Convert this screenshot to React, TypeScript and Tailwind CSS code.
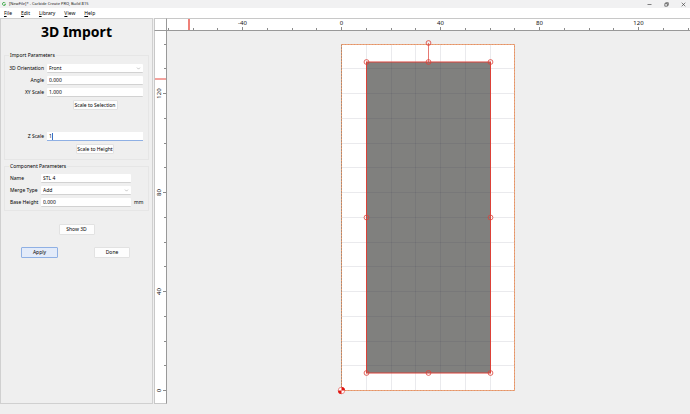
import type { ReactNode } from "react";
import { ChevronDown } from "lucide-react";

// キャンバスの縮尺と原点（px）
const UNIT = 2.475;
const ORIGIN_X = 174;
const ORIGIN_Y = 359;

const xOf = (value: number) => Math.round(ORIGIN_X + value * UNIT) + 0.5;
const yOf = (value: number) => Math.round(ORIGIN_Y - value * UNIT) + 0.5;

const range = (from: number, to: number) => {
  const list: number[] = [];
  for (let v = from; v <= to; v += 10) list.push(v);
  return list;
};

const rulerFont = "fill-[#111] text-[6px]";
const field =
  "h-[9px] min-w-0 rounded-[1px] border-b border-[#d2d2d2] bg-white px-[2px] text-[5px] leading-[8px] text-black outline-none";

type RowProps = {
  id: string;
  label: string;
  right?: boolean;
  children: ReactNode;
};

const Row = ({ id, label, right, children }: RowProps) => (
  <>
    <label htmlFor={id} className={right ? "text-right" : ""}>
      {label}
    </label>
    {children}
  </>
);

type SelectProps = { id: string; value: string; options: string[] };

const Select = ({ id, value, options }: SelectProps) => (
  <div className="relative flex">
    <select id={id} defaultValue={value} className={`${field} w-full appearance-none`}>
      {options.map((o) => (
        <option key={o}>{o}</option>
      ))}
    </select>
    <ChevronDown className="pointer-events-none absolute top-[2px] right-[2px] size-[5px] text-[#777]" />
  </div>
);

type ButtonProps = { className: string; children: ReactNode };

const Button = ({ className, children }: ButtonProps) => (
  <button
    type="button"
    className={`flex items-center justify-center rounded-[1px] border whitespace-nowrap ${className}`}
  >
    {children}
  </button>
);

const TitleBar = () => (
  <header className="flex h-2 shrink-0 items-center justify-between bg-[#f1f1f2] pr-1 pl-[2px]">
    <div className="flex items-center gap-[3px] text-[4px] leading-[8px] text-[#222]">
      <svg viewBox="0 0 10 10" className="size-[4px]">
        <path d="M8.5 2.5A4 4 0 1 0 9 6H5.5" fill="none" stroke="#39a845" strokeWidth="2.2" />
      </svg>
      <span>[NewFile]* - Carbide Create PRO, Build 815</span>
    </div>
    <div className="flex items-center gap-3 text-[#333]">
      <button type="button" aria-label="Minimize">
        <svg viewBox="0 0 5 5" className="size-[5px]">
          <path d="M.5 2.5h4" stroke="currentColor" strokeWidth=".6" />
        </svg>
      </button>
      <button type="button" aria-label="Restore">
        <svg viewBox="0 0 5 5" className="size-[5px]">
          <path
            d="M.8 1.6h2.6v2.6H.8zM1.7 1.2V.7h2.6v2.6h-.6"
            fill="none"
            stroke="currentColor"
            strokeWidth=".6"
          />
        </svg>
      </button>
      <button type="button" aria-label="Close">
        <svg viewBox="0 0 5 5" className="size-[5px]">
          <path d="M.7.7l3.6 3.6M4.3.7L.7 4.3" stroke="currentColor" strokeWidth=".6" />
        </svg>
      </button>
    </div>
  </header>
);

const MenuBar = () => (
  <nav className="flex h-[10px] shrink-0 items-center gap-[9px] bg-white px-1 leading-[10px]">
    {["File", "Edit", "Library", "View", "Help"].map((name) => (
      <button type="button" key={name}>
        <span className="underline decoration-1">{name[0]}</span>
        {name.slice(1)}
      </button>
    ))}
  </nav>
);

const SidePanel = () => (
  <aside className="w-[153px] shrink-0 border border-[#d0d0d0] bg-[#efefef] px-[3px]">
    <h1 className="mt-[3px] text-center text-[14px] leading-[20px] font-bold">3D Import</h1>

    {/* インポート設定 */}
    <fieldset className="mt-[9px] h-[109px] border border-[#e6e6e6] px-1">
      <legend className="px-px leading-[9px]">Import Parameters</legend>
      <div className="mt-[4px] grid grid-cols-[35px_96px] items-center gap-x-[3px] gap-y-[3px] leading-[9px] whitespace-nowrap">
        <Row id="orientation" label="3D Orientation" right>
          <Select id="orientation" value="Front" options={["Front", "Back", "Left", "Right", "Top", "Bottom"]} />
        </Row>
        <Row id="angle" label="Angle" right>
          <input id="angle" defaultValue="0.000" className={field} />
        </Row>
        <Row id="xy" label="XY Scale" right>
          <input id="xy" defaultValue="1.000" className={field} />
        </Row>
        <div className="col-start-2 flex justify-center">
          <Button className="h-[10px] w-[45px] border-[#e2e2e2] bg-[#fdfdfd]">Scale to Selection</Button>
        </div>
      </div>
      <div className="mt-[22px] grid grid-cols-[35px_96px] items-center gap-x-[3px] gap-y-[3px] leading-[9px] whitespace-nowrap">
        <Row id="z" label="Z Scale" right>
          <div className="flex h-[9px] items-center border-b border-[#8fb0e4] bg-white pl-[2px]">
            <input
              id="z"
              defaultValue="1"
              className="field-sizing-content h-[7px] border-r border-[#3b6fc4] text-[5px] leading-[7px] outline-none"
            />
          </div>
        </Row>
        <div className="col-start-2 flex justify-center">
          <Button className="h-[10px] w-[38px] border-[#e2e2e2] bg-[#fdfdfd]">Scale to Height</Button>
        </div>
      </div>
    </fieldset>

    {/* コンポーネント設定 */}
    <fieldset className="mt-[2px] h-[49px] border border-[#e6e6e6] px-1">
      <legend className="px-px leading-[9px]">Component Parameters</legend>
      <div className="mt-[3px] grid grid-cols-[29px_90px_1fr] items-center gap-x-[2px] gap-y-[3px] pl-px leading-[9px] whitespace-nowrap">
        <Row id="name" label="Name">
          <input id="name" defaultValue="STL 4" className={field} />
        </Row>
        <span />
        <Row id="merge" label="Merge Type">
          <Select id="merge" value="Add" options={["Add", "Subtract", "Merge", "Replace"]} />
        </Row>
        <span />
        <Row id="base" label="Base Height">
          <input id="base" defaultValue="0.000" className={field} />
        </Row>
        <span className="pl-px">mm</span>
      </div>
    </fieldset>

    <div className="mt-[13px] flex justify-center">
      <Button className="h-[11px] w-[36px] border-[#e2e2e2] bg-[#fdfdfd]">Show 3D</Button>
    </div>
    <div className="mt-[12px] flex justify-between pr-[19px] pl-[17px]">
      <Button className="h-[11px] w-[37px] border-[#8fb0e4] bg-[#e3ebf9]">Apply</Button>
      <Button className="h-[11px] w-[36px] border-[#e2e2e2] bg-[#fdfdfd]">Done</Button>
    </div>
  </aside>
);

const TopRuler = () => (
  <svg className="h-[13px] w-full border-y border-t-[#c8c8c8] border-b-[#999] bg-white">
    {range(-70, 140).map((v) => (
      <g key={v}>
        <path d={`M${xOf(v)} ${v % 40 === 0 ? 8 : 9}V12`} stroke="#8a8a8a" />
        {v % 40 === 0 && (
          <text x={xOf(v)} y="6" textAnchor="middle" className={rulerFont}>
            {v}
          </text>
        )}
      </g>
    ))}
    <path d="M22 0V12" stroke="#ef8078" strokeWidth="2" />
  </svg>
);

const LeftRuler = () => (
  <svg className="h-full w-[13px] border-x border-b border-l-[#c8c8c8] border-r-[#999] border-b-[#c8c8c8] bg-white">
    {range(0, 140).map((v) => (
      <g key={v}>
        <path d={`M${v % 40 === 0 ? 8 : 9} ${yOf(v)}H12`} stroke="#8a8a8a" />
        {v % 40 === 0 && (
          <text
            transform={`translate(6 ${yOf(v)}) rotate(-90)`}
            textAnchor="middle"
            className={rulerFont}
          >
            {v}
          </text>
        )}
      </g>
    ))}
    <path d="M0 48H12" stroke="#e8463c" strokeWidth="1" />
  </svg>
);

const Canvas = () => {
  const left = xOf(0);
  const right = xOf(70);
  const top = yOf(140);
  const bottom = yOf(0);
  const shape = { l: xOf(10), r: xOf(60), t: 31, b: 342 };
  const midX = (shape.l + shape.r) / 2;
  const midY = (shape.t + shape.b) / 2;
  // 選択ハンドル
  const handles = [
    [midX, 12],
    [shape.l, shape.t],
    [midX, shape.t],
    [shape.r, shape.t],
    [shape.l, midY],
    [shape.r, midY],
    [shape.l, shape.b],
    [midX, shape.b],
    [shape.r, shape.b],
  ];

  return (
    <svg className="h-full w-full bg-[#efefef]">
      <rect x={left} y={top} width={right - left} height={bottom - top} fill="#fff" />
      <rect
        x={shape.l}
        y={shape.t}
        width={shape.r - shape.l}
        height={shape.b - shape.t}
        fill="#80807e"
      />
      {/* グリッド */}
      <g stroke="#30304a" strokeOpacity=".1">
        {range(10, 60).map((v) => (
          <path key={v} d={`M${xOf(v)} ${top}V${bottom}`} />
        ))}
        {range(10, 130).map((v) => (
          <path key={v} d={`M${left} ${yOf(v)}H${right}`} />
        ))}
      </g>
      {/* 材料の枠 */}
      <path d={`M${left} ${top}V${bottom}`} stroke="#777" />
      <rect
        x={left}
        y={top}
        width={right - left}
        height={bottom - top}
        fill="none"
        stroke="#f0a070"
        strokeDasharray="2 1"
      />
      <path d={`M${left} ${bottom}H${right}V${top}H${left}`} fill="none" stroke="#e08a5c" strokeOpacity=".6" />
      <g fill="none" stroke="#dc4138">
        <rect x={shape.l} y={shape.t} width={shape.r - shape.l} height={shape.b - shape.t} />
        <path d={`M${midX} 12V${shape.t}`} strokeOpacity=".7" />
        {handles.map(([cx, cy]) => (
          <circle key={`${cx}-${cy}`} cx={cx} cy={cy} r="2.4" strokeWidth=".8" />
        ))}
      </g>
      {/* 原点 */}
      <g transform={`translate(${left} ${bottom})`}>
        <circle r="3.3" fill="#fff" stroke="#e0302a" strokeWidth=".5" />
        <path d="M0 0V-3.5A3.5 3.5 0 0 1 3.5 0zM0 0V3.5A3.5 3.5 0 0 1-3.5 0z" fill="#e0150f" />
      </g>
    </svg>
  );
};

export default function App() {
  return (
    <div className="flex h-screen flex-col bg-[#efefef] pb-[10px] font-['Noto_Sans',sans-serif] text-[5px] text-black">
      <TitleBar />
      <MenuBar />
      <main className="flex min-h-0 flex-1 gap-px">
        <SidePanel />
        <div className="grid min-w-0 flex-1 grid-cols-[13px_minmax(0,1fr)] grid-rows-[13px_minmax(0,1fr)]">
          <div className="border border-[#c8c8c8] border-r-[#999] border-b-[#999] bg-white" />
          <TopRuler />
          <LeftRuler />
          <Canvas />
        </div>
      </main>
    </div>
  );
}
